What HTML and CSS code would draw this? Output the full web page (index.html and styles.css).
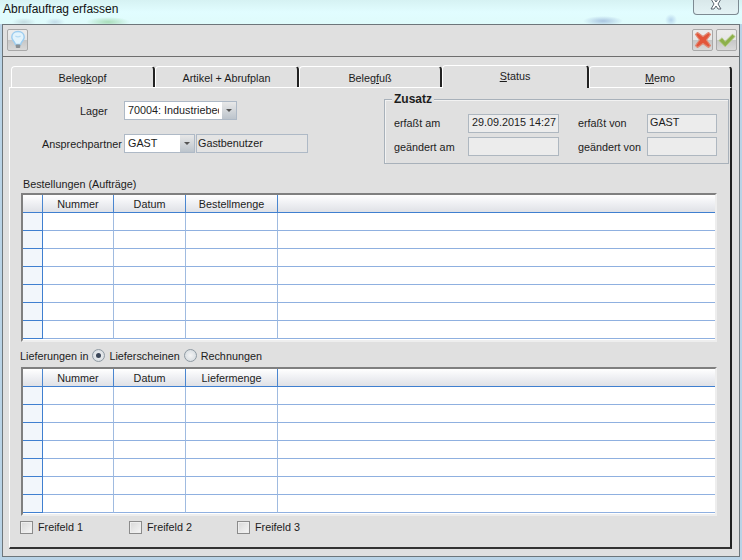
FILE: index.html
```html
<!DOCTYPE html>
<html lang="de">
<head>
    <meta charset="UTF-8">
    <title>Abrufauftrag erfassen</title>
    <link rel="stylesheet" href="styles.css">
</head>
<body>
    <div class="titlebar">
        <span class="title-text">Abrufauftrag erfassen</span>
        <div class="close-btn">
            <svg width="14" height="10" viewBox="0 0 14 10"><path d="M2 -1 L5 -1 L7 2 L9 -1 L12 -1 L9 4 L12 9 L9 9 L7 6 L5 9 L2 9 L5 4 Z" fill="#fff" stroke="#5a6570" stroke-width="1"/></svg>
        </div>
    </div>
    <div class="window">
        <div class="toolbar">
            <div class="tool-btn">
                <svg width="16" height="20" viewBox="0 0 18 22">
                    <path d="M9 1.5 C4.5 1.5 2 4.5 2 7.8 C2 10.5 4.2 12 5.5 14.5 L6 16 L12 16 L12.5 14.5 C13.8 12 16 10.5 16 7.8 C16 4.5 13.5 1.5 9 1.5 Z" fill="#e2f3fc" stroke="#9ccdf0" stroke-width="1.6"/>
                    <path d="M6 6.5 Q9 8.5 12 6.5" fill="none" stroke="#b5dbf4" stroke-width="1.2"/>
                    <rect x="6.5" y="16" width="5" height="4" rx="1" fill="#8a9094"/>
                </svg>
            </div>
            <div class="toolbar-right">
                <div class="tool-btn">
                    <svg width="18" height="18" viewBox="0 0 18 18"><path d="M3.5 1.5 L9 5.5 L14.5 1.5 L16.5 3.5 L12.5 9 L16.5 14.5 L14.5 16.5 L9 12.5 L3.5 16.5 L1.5 14.5 L5.5 9 L1.5 3.5 Z" fill="#e3553a" stroke="#e08a75" stroke-width="1.2" stroke-linejoin="round"/></svg>
                </div>
                <div class="tool-btn">
                    <svg width="18" height="15" viewBox="0 0 20 16"><path d="M1 8 L4.5 5 L8 9 L16 1 L19 3.5 L8 15 Z" fill="#8db04a" stroke="#b5cc8a" stroke-width="1" stroke-linejoin="round"/></svg>
                </div>
            </div>
        </div>
        <div class="tabs">
            <div class="tab">Beleg<u>k</u>opf</div>
            <div class="tab">Artikel + Abrufplan</div>
            <div class="tab tab-narrow">Beleg<u>f</u>uß</div>
            <div class="tab tab-active"><u>S</u>tatus</div>
            <div class="tab tab-narrow"><u>M</u>emo</div>
        </div>
        <div class="panel">
            <div class="top-area">
                <div class="form-left">
                    <div class="form-row">
                        <span class="lbl lbl-lager">Lager</span>
                        <div class="combo combo-lager">
                            <span class="combo-text">70004: Industriebedarf</span>
                            <span class="combo-arrow"></span>
                        </div>
                    </div>
                    <div class="form-row">
                        <span class="lbl lbl-partner">Ansprechpartner</span>
                        <div class="combo combo-gast">
                            <span class="combo-text">GAST</span>
                            <span class="combo-arrow"></span>
                        </div>
                        <div class="name-field">Gastbenutzer</div>
                    </div>
                </div>
                <div class="zusatz">
                    <span class="zusatz-legend">Zusatz</span>
                    <div class="zusatz-grid">
                        <span class="zusatz-first">erfaßt am</span>
                        <div class="ro-field ro-date">29.09.2015 14:27</div>
                        <span class="zusatz-first">erfaßt von</span>
                        <div class="ro-field">GAST</div>
                        <span>geändert am</span>
                        <div class="ro-field"></div>
                        <span>geändert von</span>
                        <div class="ro-field"></div>
                    </div>
                </div>
            </div>

            <div class="section-label">Bestellungen (Aufträge)</div>
            <div class="grid-wrap">
                <table class="grid">
                    <colgroup><col class="c0"><col class="c1"><col class="c2"><col class="c3"><col></colgroup>
                    <tr><th></th><th>Nummer</th><th>Datum</th><th>Bestellmenge</th><th></th></tr>
                    <tr><td></td><td></td><td></td><td></td><td></td></tr>
                    <tr><td></td><td></td><td></td><td></td><td></td></tr>
                    <tr><td></td><td></td><td></td><td></td><td></td></tr>
                    <tr><td></td><td></td><td></td><td></td><td></td></tr>
                    <tr><td></td><td></td><td></td><td></td><td></td></tr>
                    <tr><td></td><td></td><td></td><td></td><td></td></tr>
                    <tr><td></td><td></td><td></td><td></td><td></td></tr>
                </table>
            </div>

            <div class="radio-row">
                <span>Lieferungen in</span>
                <span class="radio radio-on"></span>
                <span>Lieferscheinen</span>
                <span class="radio"></span>
                <span>Rechnungen</span>
            </div>
            <div class="grid-wrap">
                <table class="grid">
                    <colgroup><col class="c0"><col class="c1"><col class="c2"><col class="c3"><col></colgroup>
                    <tr><th></th><th>Nummer</th><th>Datum</th><th>Liefermenge</th><th></th></tr>
                    <tr><td></td><td></td><td></td><td></td><td></td></tr>
                    <tr><td></td><td></td><td></td><td></td><td></td></tr>
                    <tr><td></td><td></td><td></td><td></td><td></td></tr>
                    <tr><td></td><td></td><td></td><td></td><td></td></tr>
                    <tr><td></td><td></td><td></td><td></td><td></td></tr>
                    <tr><td></td><td></td><td></td><td></td><td></td></tr>
                    <tr><td></td><td></td><td></td><td></td><td></td></tr>
                </table>
            </div>

            <div class="check-row">
                <label class="check check-1"><span class="box"></span>Freifeld 1</label>
                <label class="check"><span class="box"></span>Freifeld 2</label>
                <label class="check"><span class="box"></span>Freifeld 3</label>
            </div>
        </div>
    </div>
</body>
</html>
```

FILE: styles.css
```css
* {
    box-sizing: border-box;
}
body {
    margin: 0;
    width: 742px;
    height: 560px;
    overflow: hidden;
    position: relative;
    background: #b9d3e6;
    font-family: "Liberation Sans", Arial, sans-serif;
    font-size: 10.8px;
    color: #1c1c1c;
}
.titlebar {
    height: 24px;
    padding: 2px 0 0 3px;
    font-size: 12px;
    color: #111;
    background:
        radial-gradient(ellipse 12px 4px at 24px 22px, #c3dbe0, transparent),
        radial-gradient(ellipse 10px 4px at 55px 22px, #c3dbe8, transparent),
        radial-gradient(ellipse 22px 5px at 108px 22px, #a9ddb9, transparent),
        radial-gradient(ellipse 20px 5px at 603px 21px, #a9c4e0, transparent),
        radial-gradient(ellipse 6px 6px at 671px 20px, #b6d4ec, transparent),
        linear-gradient(#d6f2f3, #e1fdff 50%, #dffbfb);
}
.close-btn {
    position: absolute;
    top: 0;
    left: 693px;
    width: 46px;
    height: 15px;
    border: 1px solid #7d8a92;
    border-top: 0;
    border-radius: 0 0 4px 4px;
    display: flex;
    align-items: flex-start;
    justify-content: center;
    background: linear-gradient(#d9e8ea, #e4f3f5);
}
.window {
    margin: 0 2px;
    height: 533px;
    border: 1px solid #6d767b;
    background: #e0e0e0;
}
.toolbar {
    height: 32px;
    border-bottom: 1px solid #6e6e6e;
    padding: 4px 2px 0 4px;
    display: flex;
    justify-content: space-between;
}
.toolbar-right {
    display: flex;
    gap: 3px;
}
.tool-btn {
    width: 21px;
    height: 22px;
    border: 1px solid #a9a9a9;
    border-radius: 2px;
    display: flex;
    align-items: center;
    justify-content: center;
    background: linear-gradient(#ececec 0, #e6e6e6 50%, #c6c6c6 50%, #d9d9d9);
}
.tabs {
    display: flex;
    padding: 9px 0 0 8px;
    height: 30px;
    align-items: flex-end;
}
.tab {
    width: 144px;
    height: 21px;
    padding-top: 5px;
    text-align: center;
    background: #e0e0e0;
    border-top: 1px solid #fff;
    border-left: 1px solid #fff;
    border-right: 2px solid #222;
    border-radius: 4px 4px 0 0;
}
.tab-narrow {
    width: 143px;
}
.tab-active {
    width: 147px;
    height: 23px;
    padding-top: 4px;
    position: relative;
    z-index: 1;
    margin-bottom: -1px;
}
.panel {
    margin-left: 6px;
    width: 723px;
    height: 462px;
    border-top: 1px solid #fff;
    border-left: 1px solid #fff;
    border-right: 2px solid #222;
    border-bottom: 2px solid #333;
    padding: 10px 0 0 11px;
}
.top-area {
    display: flex;
    height: 65px;
}
.form-left {
    width: 363px;
    padding-top: 3px;
    display: flex;
    flex-direction: column;
    gap: 14px;
}
.form-row {
    display: flex;
    align-items: center;
    height: 19px;
}
.lbl-lager {
    margin-left: 59px;
    width: 44px;
}
.lbl-partner {
    margin-left: 21px;
    width: 82px;
}
.combo {
    display: flex;
    height: 19px;
    border: 1px solid #aeb9c6;
    background: #fff;
}
.combo-lager {
    width: 113px;
}
.combo-gast {
    width: 71px;
}
.combo-text {
    flex: 1;
    overflow: hidden;
    white-space: nowrap;
    margin-right: 3px;
    padding: 2px 0 0 3px;
}
.combo-arrow {
    width: 14px;
    background: linear-gradient(#e8e8e8, #bcc4cc);
    display: flex;
    align-items: center;
    justify-content: center;
}
.combo-arrow::after {
    content: "";
    border: 3px solid transparent;
    border-top: 3px solid #555;
    border-bottom: 0;
}
.name-field {
    width: 112px;
    height: 19px;
    margin-left: 1px;
    border: 1px solid #aeb9c6;
    background: #e4e4e4;
    padding: 2px 0 0 1px;
}
.zusatz {
    width: 345px;
    height: 65px;
    margin-top: 1px;
    border: 1px solid #a8b1ba;
    box-shadow: inset 1px 1px 0 #f2f2f2;
    position: relative;
    padding: 14px 0 0 9px;
}
.zusatz-legend {
    position: absolute;
    top: -8px;
    left: 7px;
    padding: 0 2px;
    background: #e0e0e0;
    font-weight: 700;
    font-size: 12px;
    line-height: 14px;
}
.zusatz-grid {
    display: grid;
    grid-template-columns: 74px 91px 88px 70px;
    row-gap: 4px;
    grid-auto-rows: 19px;
    align-items: center;
}
.zusatz-grid span:nth-child(3),
.zusatz-grid span:nth-child(7) {
    padding-left: 19px;
}
.zusatz-first {
    padding-bottom: 2px;
}
.ro-field {
    height: 19px;
    border: 1px solid #aeb7c0;
    background: #ececec;
    padding-left: 2px;
    line-height: 15px;
}
.ro-date {
    padding-left: 3px;
}
.section-label {
    margin-top: 14px;
    padding-left: 2px;
    height: 16px;
    line-height: 15px;
}
.grid-wrap {
    width: 696px;
    height: 149px;
    overflow: hidden;
    background: #fff;
    border-top: 2px solid #7f7f7f;
    border-left: 2px solid #7f7f7f;
    border-right: 2px solid #eeeeee;
    border-bottom: 2px solid #eeeeee;
}
.grid {
    width: 692px;
    table-layout: fixed;
    border-collapse: separate;
    border-spacing: 0;
}
.c0 {
    width: 20px;
}
.c1 {
    width: 71px;
}
.c2 {
    width: 72px;
}
.c3 {
    width: 92px;
}
.grid th {
    height: 18px;
    padding: 0;
    font-weight: 400;
    font-size: 10.8px;
    background: linear-gradient(#ffffff, #f0f1f4 45%, #dfe1e6);
    border-right: 1px solid #4a86d0;
    border-bottom: 1px solid #3f7fd0;
}
.grid td {
    height: 18px;
    padding: 0;
    background: #fff;
    border-right: 1px solid #a0bbe0;
    border-bottom: 1px solid #8fb0e0;
}
.grid td:first-child {
    background: #f2f6fb;
    border-right: 1px solid #3f7fd0;
    border-bottom: 1px solid #3f7fd0;
}
.grid th:last-child,
.grid td:last-child {
    border-right: 0;
}
.radio-row {
    display: flex;
    align-items: center;
    height: 25px;
    padding-top: 2px;
    margin-left: -1px;
}
.radio {
    width: 13px;
    height: 13px;
    margin: 0 4px 0 4px;
    border: 1px solid #8f9aa3;
    border-radius: 50%;
    background: radial-gradient(circle, #f4f4f4, #cfd6dc);
    display: flex;
    align-items: center;
    justify-content: center;
}
.radio-on::after {
    content: "";
    width: 5px;
    height: 5px;
    border-radius: 50%;
    background: #3a4658;
}
.check-row {
    display: flex;
    margin: 3px 0 0 -1px;
    height: 16px;
}
.check {
    display: flex;
    align-items: center;
    gap: 5px;
    width: 108px;
}
.check-1 {
    width: 109px;
}
.box {
    width: 13px;
    height: 13px;
    border: 1px solid #8b8b8b;
    background: linear-gradient(135deg, #d8d8d8, #f6f6f6);
    box-shadow: inset 0 0 0 1px #eee;
}
```
